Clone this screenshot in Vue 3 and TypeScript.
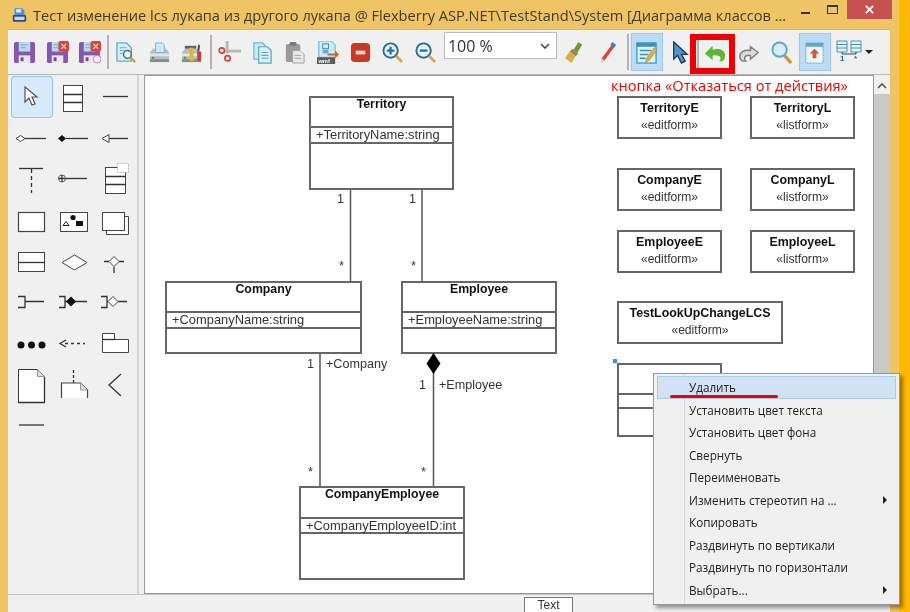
<template>
  <div class="desktop">
    <div class="window">
      <header class="titlebar">
        <svg class="app-icon" viewBox="0 0 18 18">
          <path d="M3 1h9l3 3v6H3z" fill="#4f8fd0" />
          <rect x="5" y="2" width="6" height="4" fill="#dcecf8" />
          <rect x="1" y="9" width="16" height="8" rx="1" fill="#2c4a86" />
          <rect x="3" y="11" width="12" height="4" fill="#c9d6ea" />
        </svg>
        <span class="title">Тест изменение lcs лукапа из другого лукапа @ Flexberry ASP.NET\TestStand\System [Диаграмма классов ...</span>
        <div class="controls">
          <span class="min"></span>
          <span class="max"></span>
          <span class="close">
            <svg viewBox="0 0 12 12" width="11" height="11"><path d="M2 2l8 8M10 2l-8 8" stroke="#fff" stroke-width="2" /></svg>
          </span>
        </div>
      </header>

      <div class="toolbar">
        <button class="tool"><svg viewBox="0 0 24 24"><use href="#floppy" /></svg></button>
        <button class="tool">
          <svg viewBox="0 0 24 24"><use href="#floppy" /><use href="#redx" /></svg>
        </button>
        <button class="tool">
          <svg viewBox="0 0 24 24"><use href="#floppy" /><use href="#redx" /><circle cx="20" cy="19" r="4" fill="#f4f1f4" stroke="#e070e0" /></svg>
        </button>
        <i class="sep sep-a"></i>
        <button class="tool">
          <svg viewBox="0 0 24 24">
            <path d="M2 2h10l5 5v14H2z" fill="#d6ecf6" stroke="#5fb0c8" stroke-width="1.4" />
            <path d="M5 7h7M5 10h5M5 13h4" stroke="#5fb0c8" />
            <circle cx="13" cy="14" r="4" fill="#f4fbff" stroke="#3d6d88" stroke-width="1.5" />
            <path d="M16 17l5 5" stroke="#d49a34" stroke-width="2.4" />
          </svg>
        </button>
        <button class="tool">
          <svg viewBox="0 0 24 24"><use href="#printer" /><path d="M8 2h7l2 2v8H8z" fill="#cfe8f4" stroke="#70b4cc" /></svg>
        </button>
        <button class="tool">
          <svg viewBox="0 0 24 24">
            <use href="#printer" />
            <path d="M5 5h12v3H5z" fill="#5b6468" />
            <rect x="10" y="7" width="4" height="14" fill="#e3b23c" />
            <path d="M19 3l2 2-1 6h-2z" fill="#4a5558" />
            <rect x="18" y="11" width="4" height="10" rx="1" fill="#c63d30" />
          </svg>
        </button>
        <i class="sep sep-b"></i>
        <button class="tool">
          <svg viewBox="0 0 24 24">
            <rect x="8" y="0" width="3" height="13" fill="#b4b8b9" />
            <rect x="8" y="9" width="16" height="3" fill="#b4b8b9" />
            <circle cx="4" cy="10" r="2.8" fill="none" stroke="#d8453a" stroke-width="1.8" />
            <circle cx="10" cy="18" r="2.8" fill="none" stroke="#d8453a" stroke-width="1.8" />
          </svg>
        </button>
        <button class="tool">
          <svg viewBox="0 0 24 24">
            <path d="M3 2h9l3 3v14H3z" fill="#cfe7f3" stroke="#72b6d0" stroke-width="1.3" />
            <path d="M8 6h9l4 4v13H8z" fill="#d9eef8" stroke="#59a6c6" stroke-width="1.3" />
            <path d="M11 12h7M11 15h7M11 18h7" stroke="#59a6c6" stroke-width="1.2" />
          </svg>
        </button>
        <button class="tool">
          <svg viewBox="0 0 24 24">
            <rect x="3" y="3" width="15" height="19" rx="2" fill="#9a9a9a" />
            <rect x="7" y="1" width="7" height="4" rx="1" fill="#777" />
            <path d="M10 10h8l4 4v9H10z" fill="#e9e9e9" stroke="#a0a0a0" />
            <path d="M12 15h7M12 18h7" stroke="#a0a0a0" />
          </svg>
        </button>
        <button class="tool">
          <svg viewBox="0 0 24 24">
            <path d="M3 0h13l4 4v13H3z" fill="#d2eaf5" stroke="#62aecb" />
            <rect x="7" y="3" width="6" height="5" fill="none" stroke="#3f8db3" />
            <rect x="7" y="9" width="6" height="4" fill="#62aecb" />
            <rect x="1" y="17" width="19" height="7" fill="#5b5b5b" />
            <text x="2.5" y="22.5" class="wmf">wmf</text>
            <path d="M12 13h8v-3l4 4-4 4v-3h-8z" fill="#d8602a" />
          </svg>
        </button>
        <button class="tool">
          <svg viewBox="0 0 24 24">
            <rect x="2" y="2" width="20" height="20" rx="4" fill="#c93a22" />
            <rect x="7" y="10" width="10" height="4" fill="#f5d5cc" />
          </svg>
        </button>
        <button class="tool">
          <svg viewBox="0 0 24 24">
            <circle cx="10" cy="10" r="7.5" fill="#e8f5fa" stroke="#2f6c8e" stroke-width="2" />
            <path d="M6 10h8M10 6v8" stroke="#1d6fb8" stroke-width="2.4" />
            <path d="M16 16l6 6" stroke="#d8a84a" stroke-width="3" />
          </svg>
        </button>
        <button class="tool">
          <svg viewBox="0 0 24 24">
            <circle cx="10" cy="10" r="7.5" fill="#e8f5fa" stroke="#2f6c8e" stroke-width="2" />
            <path d="M6 10h8" stroke="#1d6fb8" stroke-width="2.4" />
            <path d="M16 16l6 6" stroke="#d8a84a" stroke-width="3" />
          </svg>
        </button>

        <div class="combo">
          <span>100 %</span>
          <svg viewBox="0 0 10 6" width="10" height="6"><path d="M1 1l4 4 4-4" fill="none" stroke="#444" stroke-width="1.6" /></svg>
        </div>

        <button class="tool">
          <svg viewBox="0 0 24 24">
            <path d="M15 1l4 3-5 8-4-3z" fill="#6f9a2c" />
            <path d="M9 8l6 5-3 3-6-5z" fill="#8a8a50" />
            <path d="M6 11l6 5-4 7-7-5z" fill="#d8b040" />
          </svg>
        </button>
        <button class="tool">
          <svg viewBox="0 0 24 24">
            <path d="M17 3l3 2L9 20l-3 2 0-4z" fill="#d8453a" />
            <path d="M17 1l4 3-2 3-4-3z" fill="#4a7fb8" />
            <path d="M6 18l3 2-4 3z" fill="#e8c9a0" />
          </svg>
        </button>
        <i class="sep sep-c"></i>
        <button class="tool active">
          <svg viewBox="0 0 24 24">
            <rect x="2" y="2" width="20" height="21" fill="#dff0f8" stroke="#3e92b8" stroke-width="1.3" />
            <rect x="2" y="2" width="20" height="4" fill="#3e92b8" />
            <path d="M5 10h12M5 14h9M5 18h6" stroke="#3e92b8" stroke-width="1.5" />
            <path d="M20 7l3 2-8 11-4 2 1-4z" fill="#e0b040" stroke="#a07820" stroke-width=".5" />
          </svg>
        </button>
        <button class="tool">
          <svg viewBox="0 0 24 24">
            <path d="M6 1v18l4-4 4 8 4-2-4-7h6z" fill="#4f94d8" stroke="#1d3a58" stroke-width="1.4" />
          </svg>
        </button>
        <i class="sep sep-d"></i>
        <button class="tool">
          <svg viewBox="0 0 24 24">
            <path d="M1 13l8-8v4c8-2 13 1 13 6 0 3-1 5-3 6h-3c2-2 3-7-7-6v5z" fill="#5cb82f" />
          </svg>
        </button>
        <button class="tool">
          <svg viewBox="0 0 24 24">
            <path d="M22 12l-8-6v4c-6-1-11 1-11 6 0 2 1 4 3 5h3c-2-2-2-7 5-6v4z" fill="#dcdcdc" stroke="#7d7d7d" stroke-width="1.5" />
          </svg>
        </button>
        <button class="tool">
          <svg viewBox="0 0 24 24">
            <circle cx="10" cy="9" r="7.5" fill="#d6eef8" stroke="#58a8d0" stroke-width="2" />
            <path d="M15 15l7 8" stroke="#d89038" stroke-width="3.4" />
          </svg>
        </button>
        <button class="tool active tool-gap">
          <svg viewBox="0 0 24 24">
            <rect x="3" y="2" width="18" height="21" fill="#eef6fb" stroke="#5da9c8" stroke-dasharray="2 1" />
            <rect x="3" y="2" width="18" height="4" fill="#5da9c8" />
            <path d="M12 8l5 5h-3v5h-4v-5H7z" fill="#d8562a" />
          </svg>
        </button>
        <button class="tool tool-wide">
          <svg viewBox="0 0 28 24">
            <path d="M2 1h10v11H2zM16 1h10v11H16zM2 4.5h10M2 8h10M16 4.5h10M16 8h10" fill="#e8f4fa" stroke="#3e92b8" />
            <path d="M7 12v2h14v-2" fill="none" stroke="#444" />
            <text x="5" y="21" class="mult">1</text>
            <text x="19" y="21" class="mult">*</text>
          </svg>
        </button>
        <span class="drop"></span>

        <div class="undo-mark"></div>
      </div>

      <div class="main">
        <aside class="palette">
          <button class="pal selected">
            <svg viewBox="0 0 42 42"><path d="M14 11v15l4-4 3 7 3-1-3-7h5z" fill="#fff" stroke="#555" stroke-width="1.2" /></svg>
          </button>
          <button class="pal">
            <svg viewBox="0 0 42 42"><rect x="10.5" y="9.5" width="19" height="26" class="box" /><path d="M10 18.5h20M10 26.5h20" class="ln" /></svg>
          </button>
          <button class="pal">
            <svg viewBox="0 0 42 42"><path d="M8 20.5h25" class="ln" /></svg>
          </button>

          <button class="pal">
            <svg viewBox="0 0 42 42"><path d="M14 20.5h21" class="ln" /><path d="M5 20.5l4.5-3 4.5 3-4.5 3z" class="box" /></svg>
          </button>
          <button class="pal">
            <svg viewBox="0 0 42 42"><path d="M13 20.5h22" class="ln" /><path d="M5 20.5l4-3.500 4 3.500-4 3.500z" fill="#111" /></svg>
          </button>
          <button class="pal">
            <svg viewBox="0 0 42 42"><path d="M14 20.5h19" class="ln" /><path d="M7 20.5l7-4v8z" class="box" /></svg>
          </button>

          <button class="pal">
            <svg viewBox="0 0 42 42"><path d="M8 9.5h24" class="ln" /><path d="M20.5 10v24" class="ln" stroke-dasharray="4 3" /></svg>
          </button>
          <button class="pal">
            <svg viewBox="0 0 42 42"><path d="M13 19.5h21" class="ln" /><circle cx="9" cy="19.5" r="3.5" class="box thin" /><path d="M5.5 19.5h7M9 16v7" class="ln thin" /></svg>
          </button>
          <button class="pal">
            <svg viewBox="0 0 42 42"><rect x="10.5" y="8.5" width="20" height="26" class="box" /><path d="M10 17.5h21M10 25.5h21" class="ln" /><rect x="22.5" y="4.5" width="11" height="9" fill="#fff" stroke="#bbb" stroke-dasharray="2 1" /></svg>
          </button>

          <button class="pal">
            <svg viewBox="0 0 42 42"><rect x="7.5" y="11.5" width="26" height="19" class="box shadowed" /></svg>
          </button>
          <button class="pal">
            <svg viewBox="0 0 42 42"><rect x="7.5" y="11.5" width="27" height="19" class="box" /><circle cx="20" cy="16.5" r="2.6" fill="#111" /><rect x="23" y="20" width="7" height="5" fill="#111" /><path d="M13 20.5l3 4h-6z" fill="#fff" stroke="#222" /></svg>
          </button>
          <button class="pal">
            <svg viewBox="0 0 42 42"><path d="M11.5 15.5h22v18h-22z" class="box" /><rect x="7.5" y="11.5" width="22" height="18" class="box" /></svg>
          </button>

          <button class="pal">
            <svg viewBox="0 0 42 42"><rect x="7.5" y="10.5" width="26" height="19" class="box" /><path d="M7 20.5h27" class="ln" /></svg>
          </button>
          <button class="pal">
            <svg viewBox="0 0 42 42"><path d="M9 20.5l12.5-7.5 12.5 7.5-12.5 7.5z" class="box" /></svg>
          </button>
          <button class="pal">
            <svg viewBox="0 0 42 42"><path d="M9 19.5h5M24 19.5h5M19 25v6" class="ln" /><path d="M14 19.5l5-5 5 5-5 5z" class="box" /></svg>
          </button>

          <button class="pal">
            <svg viewBox="0 0 42 42"><path d="M7 12.5h7v11h-7M14 17.5h19" class="ln" /></svg>
          </button>
          <button class="pal">
            <svg viewBox="0 0 42 42"><path d="M6 12.5h6v11h-6M12 17.5h22" class="ln" /><path d="M13 17.5l5-5 5 5-5 5z" fill="#111" /></svg>
          </button>
          <button class="pal">
            <svg viewBox="0 0 42 42"><path d="M6 12.5h6v11h-6M23 17.5h9M12 17.5h1" class="ln" /><path d="M13 17.5l5-5 5 5-5 5z" class="box" /></svg>
          </button>

          <button class="pal">
            <svg viewBox="0 0 42 42"><circle cx="10" cy="20" r="3.5" fill="#111" /><circle cx="20.5" cy="20" r="3.5" fill="#111" /><circle cx="31" cy="20" r="3.5" fill="#111" /></svg>
          </button>
          <button class="pal">
            <svg viewBox="0 0 42 42"><path d="M12 18.5h20" class="ln" stroke-dasharray="3 3" /><path d="M13 15l-6 3.5 6 3.5" class="ln" /></svg>
          </button>
          <button class="pal">
            <svg viewBox="0 0 42 42"><path d="M7.5 14.5v-6h12v6h14v13h-26z" class="box" /><path d="M7 14.5h13" class="ln" /></svg>
          </button>

          <button class="pal">
            <svg viewBox="0 0 42 42"><path d="M7.5 2.5h19l7 7v26h-26z" fill="#fff" stroke="#333" /><path d="M26.5 2.5v7h7" fill="#ddd" stroke="#999" /><path d="M7 35.5h27M33.5 10v25" class="ln" /></svg>
          </button>
          <button class="pal">
            <svg viewBox="0 0 42 42"><path d="M20.5 3v13" class="ln" stroke-dasharray="3 2" /><path d="M8.5 31v-15h19l7 7v8" fill="#fff" stroke="#444" stroke-width="1.2" /><path d="M27.5 16v7h7" fill="#ddd" stroke="#999" /></svg>
          </button>
          <button class="pal">
            <svg viewBox="0 0 42 42"><path d="M26 7L14 18l12 11" class="ln" /></svg>
          </button>

          <button class="pal">
            <svg viewBox="0 0 42 42"><path d="M8 17h25" class="ln" stroke-width="2" /></svg>
          </button>
        </aside>

        <section class="canvas">
          <svg class="wires" width="730" height="519">
            <path v-for="w in wires" :key="w" :d="w" class="wire" />
          </svg>

          <span
            v-for="l in labels"
            :key="l.text + l.x"
            class="end-label"
            :style="{ left: l.x - 144 + 'px', top: l.y - 75 + 'px' }"
          >{{ l.text }}</span>

          <div
            v-for="c in classes"
            :key="c.name"
            class="cls"
            :style="boxStyle(c)"
          >
            <div class="cls-name" :style="{ height: c.head + 'px' }">{{ c.name }}</div>
            <div class="cls-attr" :style="{ height: c.row + 'px' }">{{ c.attr }}</div>
          </div>

          <svg class="wires" width="730" height="519">
            <path d="M289.5 278l7 10.5-7 10.5-7-10.5z" fill="#000" />
          </svg>

          <div
            v-for="f in forms"
            :key="f.name"
            class="form"
            :style="boxStyle(f)"
          >
            <strong>{{ f.name }}</strong>
            <span>{{ f.kind }}</span>
          </div>

          <div class="empty-cls" :style="boxStyle({ x: 617, y: 363, w: 105, h: 74 })">
            <div class="empty-a"></div>
          </div>
          <i class="handle"></i>

          <div class="caption">кнопка «Отказаться от действия»</div>
        </section>

        <div class="scrollbar">
          <svg viewBox="0 0 10 6" width="10" height="6"><path d="M1 5l4-4 4 4" fill="none" stroke="#555" stroke-width="1.6" /></svg>
          <div class="thumb"></div>
        </div>
      </div>

      <footer class="statusbar">
        <span class="tab">Text</span>
      </footer>
    </div>

    <ul class="menu">
      <li
        v-for="(m, i) in menu"
        :key="m.label"
        :class="{ hot: i === 0 }"
      >
        <span>{{ m.label }}</span>
        <i v-if="m.sub" class="caret"></i>
      </li>
    </ul>
    <div class="underline"></div>

    <svg class="defs" width="0" height="0">
      <defs>
        <g id="floppy">
          <path d="M1 3a2 2 0 0 1 2-2h18a2 2 0 0 1 2 2v18a2 2 0 0 1-2 2H3a2 2 0 0 1-2-2z" fill="#8458ad" />
          <rect x="6" y="1" width="12" height="10" fill="#b9dcec" />
          <path d="M8 4h7M8 7h5" stroke="#6fa9c8" />
          <rect x="6" y="15" width="12" height="8" fill="#e8e6ee" />
          <rect x="8" y="17" width="3" height="4" fill="#6d4a95" />
        </g>
        <g id="redx">
          <rect x="13" y="0" width="11" height="11" rx="2" fill="#d8453a" />
          <path d="M16 3l5 5M21 3l-5 5" stroke="#f8d8d0" stroke-width="1.4" />
        </g>
        <g id="printer">
          <path d="M2 12l3-4h14l3 4v9a1 1 0 0 1-1 1H3a1 1 0 0 1-1-1z" fill="#b7bcbe" />
          <rect x="2" y="13" width="20" height="3" fill="#e2e5e5" />
          <rect x="2" y="19" width="20" height="3" fill="#868c8e" />
          <rect x="4" y="16.5" width="2.5" height="2" fill="#3a9a3a" />
        </g>
      </defs>
    </svg>
  </div>
</template>

<script setup lang="ts">
interface Rect {
  x: number;
  y: number;
  w: number;
  h: number;
}

interface ClassBox extends Rect {
  name: string;
  attr: string;
  head: number;
  row: number;
}

interface FormBox extends Rect {
  name: string;
  kind: string;
}

const classes: ClassBox[] = [
  { name: "Territory", attr: "+TerritoryName:string", x: 309, y: 96, w: 145, h: 94, head: 28, row: 14 },
  { name: "Company", attr: "+CompanyName:string", x: 165, y: 281, w: 197, h: 73, head: 28, row: 14 },
  { name: "Employee", attr: "+EmployeeName:string", x: 401, y: 281, w: 156, h: 73, head: 28, row: 14 },
  { name: "CompanyEmployee", attr: "+CompanyEmployeeID:int", x: 299, y: 486, w: 166, h: 94, head: 29, row: 13 },
];

const forms: FormBox[] = [
  { name: "TerritoryE", kind: "«editform»", x: 617, y: 96, w: 105, h: 43 },
  { name: "TerritoryL", kind: "«listform»", x: 750, y: 96, w: 105, h: 43 },
  { name: "CompanyE", kind: "«editform»", x: 617, y: 168, w: 105, h: 43 },
  { name: "CompanyL", kind: "«listform»", x: 750, y: 168, w: 105, h: 43 },
  { name: "EmployeeE", kind: "«editform»", x: 617, y: 230, w: 105, h: 43 },
  { name: "EmployeeL", kind: "«listform»", x: 750, y: 230, w: 105, h: 43 },
  { name: "TestLookUpChangeLCS", kind: "«editform»", x: 617, y: 301, w: 166, h: 43 },
];

// connectors, in canvas coordinates
const wires = ["M206.5 114v92", "M278 114v92", "M176 278v133", "M289.5 278v133"];

const labels = [
  { text: "1", x: 337, y: 192 },
  { text: "1", x: 409, y: 192 },
  { text: "*", x: 339, y: 259 },
  { text: "*", x: 411, y: 259 },
  { text: "1", x: 307, y: 357 },
  { text: "+Company", x: 326, y: 357 },
  { text: "1", x: 419, y: 378 },
  { text: "+Employee", x: 439, y: 378 },
  { text: "*", x: 308, y: 465 },
  { text: "*", x: 421, y: 465 },
];

const menu = [
  { label: "Удалить" },
  { label: "Установить цвет текста" },
  { label: "Установить цвет фона" },
  { label: "Свернуть" },
  { label: "Переименовать" },
  { label: "Изменить стереотип на ...", sub: true },
  { label: "Копировать" },
  { label: "Раздвинуть по вертикали" },
  { label: "Раздвинуть по горизонтали" },
  { label: "Выбрать...", sub: true },
];

// data is in screen pixels, the canvas starts at 144,75
function boxStyle(r: Rect) {
  return {
    left: r.x - 144 + "px",
    top: r.y - 75 + "px",
    width: r.w + "px",
    height: r.h + "px",
  };
}
</script>

<style>
html,
body {
  margin: 0;
  background: #ffb900;
}
</style>

<style scoped>
.desktop {
  position: relative;
  width: 910px;
  height: 612px;
  overflow: hidden;
  background: #ffb900;
  font-family: "Liberation Sans", Arial, sans-serif;
  filter: blur(0.4px);
}

.window {
  width: 899px;
  height: 612px;
  box-sizing: border-box;
  padding: 0 9px 0 8px;
  display: flex;
  flex-direction: column;
  background: #efc465;
}

.titlebar {
  height: 29px;
  flex: none;
  display: flex;
  align-items: center;
  color: #403a2c;
  font-family: "Open Sans", "Noto Sans", sans-serif;
  font-size: 14.6px;
}

.app-icon {
  width: 15px;
  height: 16px;
  flex: none;
  margin: 0 6px 0 4px;
}

.title {
  white-space: nowrap;
}

.controls {
  margin-left: auto;
  display: flex;
  align-items: flex-start;
  align-self: flex-start;
}

.min {
  width: 9px;
  height: 2px;
  margin: 12px 17px 0 0;
  background: #333;
}

.max {
  width: 9px;
  height: 6px;
  margin: 5px 9px 0 0;
  border: 1px solid #333;
  border-top-width: 2px;
}

.close {
  width: 45px;
  height: 19px;
  display: flex;
  align-items: center;
  justify-content: center;
  background: #c75050;
  margin-right: -2px;
}

.toolbar {
  position: relative;
  height: 46px;
  flex: none;
  display: flex;
  align-items: center;
  background: #f0f0f0;
  border-top: 1px solid #c9b88c;
  border-bottom: 1px solid #b5b5b5;
  box-sizing: border-box;
}

.tool {
  width: 32.7px;
  height: 38px;
  flex: none;
  padding: 0;
  border: 0;
  background: none;
  display: flex;
  align-items: center;
  justify-content: center;
}

.tool svg {
  width: 23px;
  height: 23px;
}

.tool.active {
  width: 32px;
  background: #bcdcf6;
  border: 1px solid #9cc6ea;
  box-sizing: border-box;
}

.tool-gap {
  margin-left: 1px;
}

.tool-wide {
  margin-left: 2px;
}

.tool-wide svg {
  width: 28px;
  height: 24px;
}

.wmf {
  font-size: 6px;
  font-weight: 700;
  fill: #fff;
}

.mult {
  font-size: 8px;
  font-weight: 700;
  fill: #1f5f9f;
}

.sep {
  width: 2px;
  height: 34px;
  flex: none;
  background: #b4b4b4;
}

.sep-a {
  margin: 0 1px;
}

.sep-b {
  margin: 0 1.5px;
}

.sep-c {
  margin: 0 2px 0 2.5px;
  height: 36px;
}

.sep-d {
  margin: 0 1px 0 1px;
  height: 32px;
}

.combo {
  width: 113px;
  height: 27px;
  flex: none;
  margin: -13px 2px 0;
  box-sizing: border-box;
  padding: 0 6px 0 3px;
  display: flex;
  align-items: center;
  justify-content: space-between;
  background: #fff;
  border: 1px solid #bbb;
  font-family: "Open Sans", sans-serif;
  font-size: 16px;
  color: #333;
}

.drop {
  width: 0;
  height: 0;
  margin-left: 0;
  border: 4px solid transparent;
  border-top: 4px solid #222;
  border-bottom: 0;
}

.undo-mark {
  position: absolute;
  left: 682px;
  top: 4px;
  width: 45px;
  height: 40px;
  box-sizing: border-box;
  border: 6px solid #f00000;
}

.main {
  flex: 1;
  min-height: 0;
  display: flex;
  background: #f0f0f0;
}

.palette {
  width: 131px;
  flex: none;
  box-sizing: border-box;
  padding: 1px 0 0 3px;
  border-right: 2px solid #d4d4d4;
  display: grid;
  grid-template-columns: repeat(3, 42px);
  grid-auto-rows: 41.5px;
  align-content: start;
}

.pal {
  padding: 0;
  border: 0;
  background: none;
  width: 42px;
  height: 41.5px;
}

.pal svg {
  display: block;
  width: 42px;
  height: 42px;
}

.pal.selected {
  background: #d8e9f9;
  box-shadow: inset 0 0 0 1px #93c2ef;
  border-radius: 4px;
}

.box {
  fill: #fff;
  stroke: #444;
  stroke-width: 1;
}

.thin {
  stroke-width: 0.8;
}

.shadowed {
  stroke-width: 1.2;
}

.ln {
  stroke: #333;
  stroke-width: 1.3;
  fill: none;
}

.canvas {
  position: relative;
  width: 730px;
  margin-left: 5px;
  flex: none;
  background: #fff;
  box-shadow: inset 0 0 0 1px #999;
  overflow: hidden;
}

.wires {
  position: absolute;
  left: 0;
  top: 0;
  pointer-events: none;
}

.wire {
  stroke: #555;
  stroke-width: 1.5;
  fill: none;
}

.end-label {
  position: absolute;
  font-size: 12.6px;
  line-height: 14px;
  color: #333;
  white-space: nowrap;
}

.cls,
.form,
.empty-cls {
  position: absolute;
  box-sizing: border-box;
  border: 2px solid #666;
  background: #fff;
}

.cls-name {
  box-sizing: border-box;
  text-align: center;
  font-size: 12.3px;
  line-height: 12px;
  font-weight: 700;
  color: #111;
}

.cls-attr {
  box-sizing: content-box;
  padding-left: 5px;
  border-top: 2px solid #666;
  border-bottom: 2px solid #666;
  font-size: 12.9px;
  line-height: 14px;
  color: #333;
  white-space: nowrap;
}

.form {
  display: flex;
  flex-direction: column;
  align-items: center;
  padding-top: 2px;
  font-size: 12.1px;
  line-height: 17px;
  color: #333;
}

.form strong {
  color: #111;
  font-size: 12.4px;
}

.empty-cls {
  padding-top: 28px;
}

.empty-a {
  height: 12px;
  border-top: 2px solid #666;
  border-bottom: 2px solid #666;
}

.handle {
  position: absolute;
  left: 469px;
  top: 284px;
  width: 4px;
  height: 4px;
  background: #3c8cf0;
}

.caption {
  position: absolute;
  left: 467px;
  top: 1px;
  color: #f00000;
  font-family: "Open Sans", sans-serif;
  font-size: 14.6px;
  line-height: 18px;
  white-space: nowrap;
}

.scrollbar {
  width: 16px;
  flex: none;
  margin-bottom: -3px;
  display: flex;
  flex-direction: column;
  align-items: center;
  padding-top: 8px;
  box-sizing: border-box;
}

.thumb {
  width: 100%;
  flex: 1;
  margin-top: 5px;
  background: #c9c9c9;
}

.statusbar {
  height: 18px;
  flex: none;
  background: #f0f0f0;
  border-top: 1px solid #c4c4c4;
  box-sizing: border-box;
  position: relative;
}

.tab {
  position: absolute;
  left: 516px;
  top: 2px;
  width: 49px;
  height: 16px;
  box-sizing: border-box;
  border: 1px solid #777;
  border-bottom: 0;
  background: #fff;
  text-align: center;
  font-size: 12px;
  line-height: 14px;
  color: #333;
}

.menu {
  position: absolute;
  left: 653px;
  top: 373px;
  width: 247px;
  height: 232px;
  box-sizing: border-box;
  margin: 0;
  padding: 2px 3px;
  list-style: none;
  background: linear-gradient(90deg, #f0f0f0 30px, #d8d8d8 30px, #d8d8d8 31px, #f0f0f0 31px);
  border: 1px solid #979797;
  box-shadow: 3px 3px 4px rgba(0, 0, 0, 0.4);
  font-family: "Open Sans", "Noto Sans", sans-serif;
  font-size: 11.7px;
  color: #222;
}

.menu li {
  position: relative;
  height: 22.5px;
  box-sizing: border-box;
  padding-left: 32px;
  display: flex;
  align-items: center;
  white-space: nowrap;
}

.menu li.hot {
  background: #d0e2f4;
  box-shadow: inset 0 0 0 1px #a8ccec;
}

.caret {
  position: absolute;
  right: 9px;
  top: 7px;
  border: 4px solid transparent;
  border-left: 4px solid #222;
  border-right: 0;
}

.underline {
  position: absolute;
  left: 670px;
  top: 395px;
  width: 108px;
  height: 3px;
  background: #f00000;
  border-radius: 2px;
}

.defs {
  position: absolute;
}
</style>
